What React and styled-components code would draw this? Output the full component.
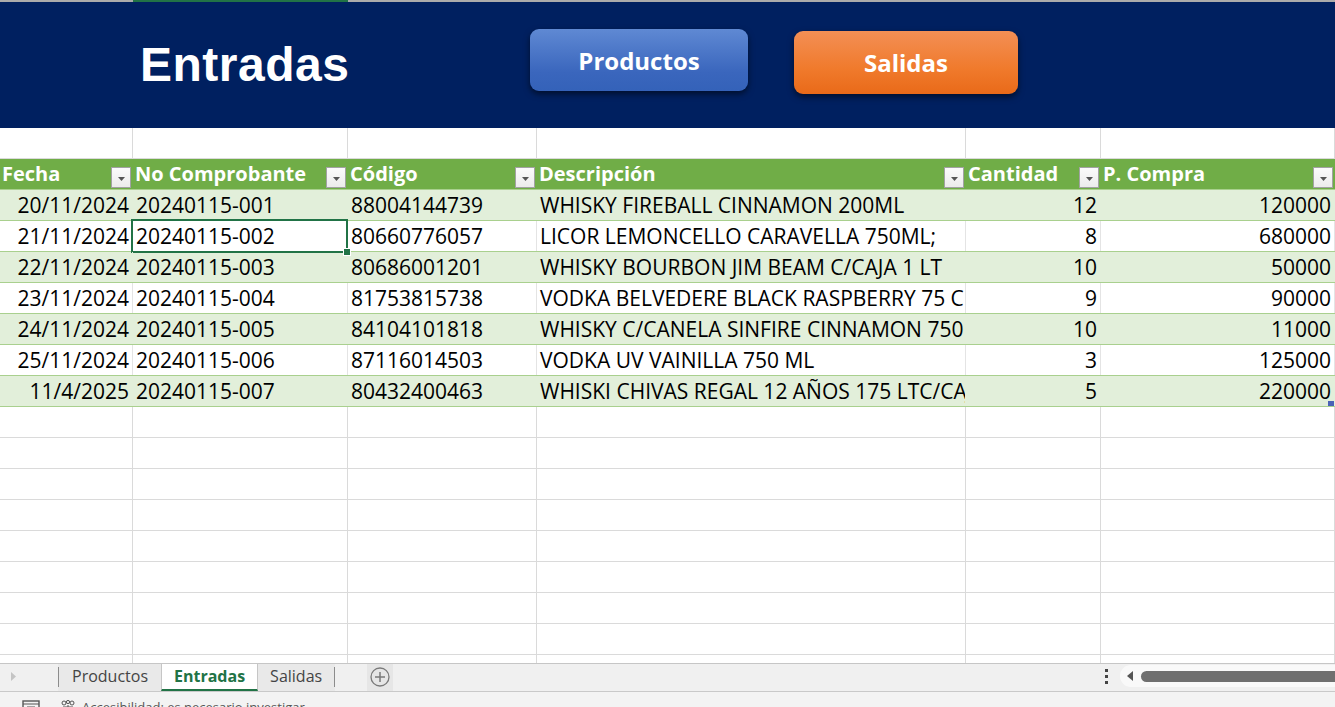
import React from "react";
import styled, { createGlobalStyle, css } from "styled-components";

const COLS = "133px 215px 189px 429px 135px 1fr";

const columns = [
  { label: "Fecha", align: "right" },
  { label: "No Comprobante", align: "left" },
  { label: "Código", align: "left" },
  { label: "Descripción", align: "left" },
  { label: "Cantidad", align: "right" },
  { label: "P. Compra", align: "right" },
];

const entries = [
  ["20/11/2024", "20240115-001", "88004144739", "WHISKY FIREBALL CINNAMON 200ML", "12", "120000"],
  ["21/11/2024", "20240115-002", "80660776057", "LICOR LEMONCELLO CARAVELLA 750ML;", "8", "680000"],
  ["22/11/2024", "20240115-003", "80686001201", "WHISKY BOURBON JIM BEAM C/CAJA 1 LT", "10", "50000"],
  ["23/11/2024", "20240115-004", "81753815738", "VODKA BELVEDERE BLACK RASPBERRY 75 CL", "9", "90000"],
  ["24/11/2024", "20240115-005", "84104101818", "WHISKY C/CANELA SINFIRE CINNAMON 750 ML", "10", "11000"],
  ["25/11/2024", "20240115-006", "87116014503", "VODKA UV VAINILLA 750 ML", "3", "125000"],
  ["11/4/2025", "20240115-007", "80432400463", "WHISKI CHIVAS REGAL 12 AÑOS 175 LTC/CAJA", "5", "220000"],
];

const EMPTY_AFTER = 9;

const GlobalStyle = createGlobalStyle`
  * { box-sizing: border-box; }
  html, body {
    margin: 0;
    padding: 0;
    background: #ffffff;
    overflow: hidden;
  }
  body {
    font-family: "Open Sans", "Noto Sans", sans-serif;
  }
`;

export default function App() {
  return (
    <>
      <GlobalStyle />
      <Page>
        <TopEdge>
          {columns.map((c, i) => (
            <EdgeCell key={c.label} $active={i === 1} />
          ))}
        </TopEdge>

        <Banner>
          <Title>Entradas</Title>
          <NavButton $variant="blue" $top={27} $width={218} $height={62}>
            Productos
          </NavButton>
          <NavButton $variant="orange" $top={29} $width={224} $height={63}>
            Salidas
          </NavButton>
        </Banner>

        <Sheet>
          <Row $kind="empty">
            {columns.map((c) => (
              <Cell key={c.label} $kind="empty" />
            ))}
          </Row>

          <Row $kind="header">
            {columns.map((c) => (
              <HeaderCell key={c.label}>
                <span>{c.label}</span>
                <FilterButton>
                  <svg width="7" height="4" viewBox="0 0 7 4">
                    <path d="M0 0h7L3.5 4z" fill="#555" />
                  </svg>
                </FilterButton>
              </HeaderCell>
            ))}
          </Row>

          {entries.map((entry, r) => {
            const kind = r % 2 === 0 ? "band" : "plain";
            return (
              <Row key={entry[1]} $kind={kind}>
                {entry.map((value, i) => (
                  <Cell
                    key={i}
                    $kind={kind}
                    $align={columns[i].align}
                    $selected={r === 1 && i === 1}
                    $resize={r === entries.length - 1 && i === columns.length - 1}
                  >
                    {value}
                  </Cell>
                ))}
              </Row>
            );
          })}

          {Array.from({ length: EMPTY_AFTER }).map((_, r) => (
            <Row key={"e" + r} $kind="empty">
              {columns.map((c) => (
                <Cell key={c.label} $kind="empty" />
              ))}
            </Row>
          ))}
        </Sheet>

        <TabBar>
          <SheetNav>
            <svg width="5" height="9" viewBox="0 0 5 9">
              <path d="M0 0l5 4.5L0 9z" fill="#c4c4c4" />
            </svg>
          </SheetNav>
          <TabStrip>
            <Divider />
            <Tab $pad={13}>Productos</Tab>
            <Tab $active $pad={12}>Entradas</Tab>
            <Tab $pad={12}>Salidas</Tab>
            <Divider />
          </TabStrip>
          <AddSheet>
            <svg width="20" height="20" viewBox="0 0 20 20">
              <circle cx="10" cy="10" r="9" fill="none" stroke="#7a7a7a" strokeWidth="1.3" />
              <path d="M10 5v10M5 10h10" stroke="#7a7a7a" strokeWidth="1.5" />
            </svg>
          </AddSheet>
          <Spacer />
          <MoreDots>
            <i />
            <i />
            <i />
          </MoreDots>
          <ScrollTrack>
            <svg width="6" height="10" viewBox="0 0 6 10">
              <path d="M6 0v10L0 5z" fill="#555" />
            </svg>
            <ScrollThumb />
          </ScrollTrack>
        </TabBar>

        <StatusBar>
          <StatusIcon $left={22}>
            <svg width="18" height="14" viewBox="0 0 18 14">
              <rect x="1" y="1" width="16" height="12" fill="none" stroke="#555" strokeWidth="1.4" />
              <path d="M1 4h16M5 7h8" stroke="#555" strokeWidth="1.2" />
            </svg>
          </StatusIcon>
          <StatusIcon $left={20}>
            <svg width="16" height="14" viewBox="0 0 16 14">
              <circle cx="4" cy="3" r="2" fill="none" stroke="#555" strokeWidth="1" />
              <circle cx="8" cy="2" r="1.6" fill="none" stroke="#555" strokeWidth="1" />
              <circle cx="12" cy="3" r="2" fill="none" stroke="#555" strokeWidth="1" />
              <path d="M3 7h10M8 5v8" stroke="#555" strokeWidth="1" />
            </svg>
          </StatusIcon>
          <StatusText>Accesibilidad: es necesario investigar</StatusText>
        </StatusBar>
      </Page>
    </>
  );
}

const Page = styled.div`
  display: flex;
  flex-direction: column;
  width: 100vw;
  height: 100vh;
  overflow: hidden;
`;

const TopEdge = styled.div`
  display: grid;
  grid-template-columns: ${COLS};
  height: 2px;
  flex-shrink: 0;
`;

const EdgeCell = styled.div`
  background: ${({ $active }) => ($active ? "#217346" : "#ababab")};
`;

const Banner = styled.div`
  display: flex;
  align-items: flex-start;
  height: 126px;
  flex-shrink: 0;
  padding-left: 140px;
  background: #002060;
`;

const Title = styled.h1`
  width: 390px;
  margin: 37px 0 0;
  font-family: "Liberation Sans", Arial, sans-serif;
  font-size: 48px;
  font-weight: 700;
  letter-spacing: 0.5px;
  line-height: 52px;
  color: #ffffff;
`;

const NavButton = styled.div`
  display: flex;
  align-items: center;
  justify-content: center;
  width: ${({ $width }) => $width}px;
  height: ${({ $height }) => $height}px;
  margin-top: ${({ $top }) => $top}px;
  margin-right: 46px;
  border-radius: 9px;
  font-family: "Open Sans", sans-serif;
  font-size: 24px;
  font-weight: 700;
  color: #ffffff;
  box-shadow: 0 3px 6px rgba(0, 0, 0, 0.55);
  ${({ $variant }) =>
    $variant === "blue"
      ? css`
          background: linear-gradient(#5f89d3, #3a66bd 70%, #3462b9);
        `
      : css`
          background: linear-gradient(#f38f55, #f07a2c 60%, #e96a19);
        `}
`;

const Sheet = styled.div`
  flex: 1;
  overflow: hidden;
`;

const rowBorder = {
  empty: "#dadada",
  header: "#a9d08e",
  band: "#a9d08e",
  plain: "#a9d08e",
};

const rowFill = {
  empty: "#ffffff",
  header: "#70ad47",
  band: "#e2efda",
  plain: "#ffffff",
};

const Row = styled.div`
  display: grid;
  grid-template-columns: ${COLS};
  height: 31px;
  background: ${({ $kind }) => rowFill[$kind]};
  border-bottom: 1px solid ${({ $kind }) => rowBorder[$kind]};
`;

const cellLine = {
  empty: "#dadada",
  header: "#70ad47",
  band: "#e2efda",
  plain: "#e4e4e4",
};

const Cell = styled.div`
  position: relative;
  padding: 0 3px;
  font-size: 21px;
  line-height: 30px;
  color: #000000;
  white-space: nowrap;
  overflow: ${({ $selected, $resize }) => ($selected || $resize ? "visible" : "hidden")};
  text-align: ${({ $align }) => $align || "left"};
  border-right: 1px solid ${({ $kind }) => cellLine[$kind]};

  ${({ $selected }) =>
    $selected &&
    css`
      &::after {
        content: "";
        position: absolute;
        left: -2px;
        top: -2px;
        right: -1px;
        bottom: -2px;
        border: 2px solid #217346;
        pointer-events: none;
      }
      &::before {
        content: "";
        position: absolute;
        right: -4px;
        bottom: -5px;
        width: 6px;
        height: 6px;
        background: #217346;
        border: 1px solid #ffffff;
        z-index: 2;
      }
    `}

  ${({ $resize }) =>
    $resize &&
    css`
      &::after {
        content: "";
        position: absolute;
        right: 0;
        bottom: 0;
        width: 6px;
        height: 5px;
        background: #4a62b6;
      }
    `}
`;

const HeaderCell = styled.div`
  display: flex;
  align-items: flex-end;
  justify-content: space-between;
  padding: 0 1px 1px 2px;
  font-size: 20px;
  font-weight: 700;
  color: #ffffff;
  white-space: nowrap;
  overflow: hidden;
  border-right: 1px solid #70ad47;

  span {
    line-height: 28px;
  }
`;

const FilterButton = styled.div`
  display: flex;
  align-items: center;
  justify-content: center;
  flex-shrink: 0;
  width: 20px;
  height: 21px;
  padding-top: 2px;
  background: linear-gradient(#fbfbfb, #ececec);
  border: 1px solid #a2a2a2;
`;

const TabBar = styled.div`
  display: flex;
  align-items: stretch;
  height: 28px;
  flex-shrink: 0;
  background: #f0f0f0;
  border-top: 1px solid #c6c6c6;
  font-family: "Open Sans", "Noto Sans", sans-serif;
`;

const SheetNav = styled.div`
  display: flex;
  align-items: center;
  width: 58px;
  padding: 0 0 2px 11px;
`;

const TabStrip = styled.div`
  display: flex;
  align-items: stretch;
  background: #e9e9e9;
`;

const Divider = styled.div`
  width: 1px;
  margin: 3px 0 4px;
  background: #8c8c8c;
`;

const Tab = styled.div`
  display: flex;
  align-items: center;
  padding: 0 ${({ $pad }) => $pad}px 4px;
  font-size: 16px;
  color: #444444;
  ${({ $active }) =>
    $active &&
    css`
      padding-bottom: 2px;
      background: #ffffff;
      font-weight: 700;
      color: #217346;
      border-left: 1px solid #c6c6c6;
      border-right: 1px solid #c6c6c6;
      border-bottom: 2px solid #217346;
    `}
`;

const AddSheet = styled.div`
  display: flex;
  align-items: center;
  justify-content: center;
  width: 26px;
  margin-left: 32px;
  padding-bottom: 2px;
  background: #e6e6e6;
`;

const Spacer = styled.div`
  flex: 1;
`;

const MoreDots = styled.div`
  display: flex;
  flex-direction: column;
  justify-content: center;
  gap: 3px;
  width: 16px;
  padding: 0 0 2px 1px;

  i {
    display: block;
    width: 3px;
    height: 3px;
    background: #444444;
  }
`;

const ScrollTrack = styled.div`
  display: flex;
  align-items: center;
  gap: 8px;
  width: 215px;
  margin: 1px 0 4px;
  padding-left: 7px;
  background: #f9f9f9;
  border-radius: 12px 0 0 12px;
`;

const ScrollThumb = styled.div`
  flex: 1;
  height: 11px;
  background: #6f6f6f;
  border-radius: 6px 0 0 6px;
`;

const StatusBar = styled.div`
  display: flex;
  align-items: flex-start;
  height: 16px;
  flex-shrink: 0;
  background: #f3f3f3;
  border-top: 1px solid #c9c9c9;
  overflow: hidden;
`;

const StatusIcon = styled.div`
  margin-left: ${({ $left }) => $left}px;
  padding-top: 8px;
  line-height: 0;
`;

const StatusText = styled.div`
  margin-left: 6px;
  padding-top: 7px;
  font-family: "Open Sans", sans-serif;
  font-size: 13px;
  line-height: 16px;
  color: #555555;
  white-space: nowrap;
`;
